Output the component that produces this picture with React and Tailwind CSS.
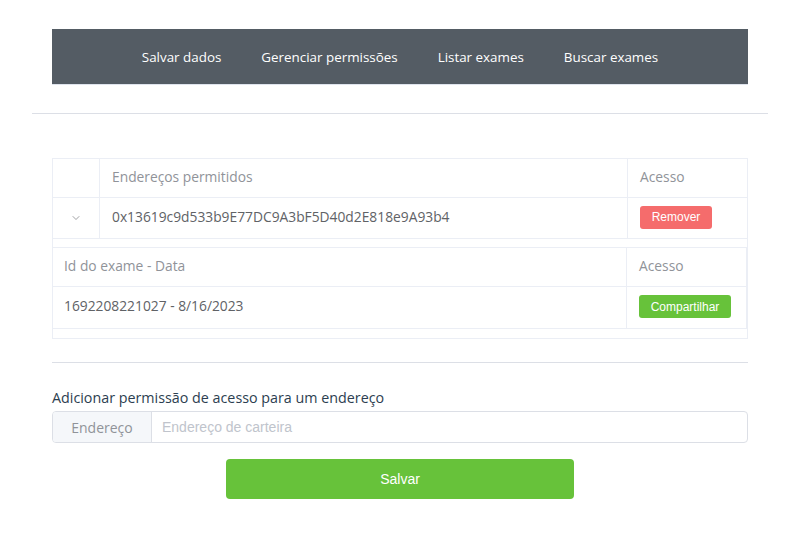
import { ChevronDown } from 'lucide-react';

const font = { fontFamily: '"Open Sans", "Noto Sans", sans-serif' };
const arial = { fontFamily: '"Liberation Sans", Arial, sans-serif' };

export default function App() {
  const navItems = ['Salvar dados', 'Gerenciar permissões', 'Listar exames', 'Buscar exames'];

  return (
    <div className="w-[800px] h-[551px] bg-white" style={font}>
      {/* Menu */}
      <div className="px-[52px] pt-[29px]">
        <div className="h-[56px] bg-[#545c64] border-b border-[#dfe4ed] flex justify-center items-stretch">
          {navItems.map((item) => (
            <div key={item} className="px-5 pt-[2px] flex items-center text-[13.4px] text-white">
              {item}
            </div>
          ))}
        </div>
      </div>

      <div className="mx-[32px] mt-[28px] h-px bg-[#dcdfe6]" />

      {/* Permissions table */}
      <div className="mx-[52px] mt-[44px] border border-[#ebeef5] text-[13.8px]">
        <div className="grid grid-cols-[47px_1fr_119px] h-[39px] border-b border-[#ebeef5] text-[#909399]">
          <div className="border-r border-[#ebeef5]" />
          <div className="border-r border-[#ebeef5] flex items-center px-3 pb-[2px]">Endereços permitidos</div>
          <div className="flex items-center px-3 pb-[2px]">Acesso</div>
        </div>
        <div className="grid grid-cols-[47px_1fr_119px] h-[41px] border-b border-[#ebeef5] text-[#606266]">
          <div className="border-r border-[#ebeef5] flex items-center justify-center">
            <ChevronDown size={12} strokeWidth={1.2} className="text-[#606266]" />
          </div>
          <div className="border-r border-[#ebeef5] flex items-center px-3 pb-[2px]">0x13619c9d533b9E77DC9A3bF5D40d2E818e9A93b4</div>
          <div className="flex items-center px-3 pb-[2px]">
            <button className="h-[23px] w-[72px] rounded-[3px] bg-[#f56c6c] text-white text-[12px]" style={arial}>
              Remover
            </button>
          </div>
        </div>

        {/* Expanded row */}
        <div className="pt-2 pb-[9px]">
          <div className="border border-l-0 border-[#ebeef5]">
            <div className="grid grid-cols-[1fr_119px] h-[39px] border-b border-[#ebeef5] text-[#909399]">
              <div className="border-r border-[#ebeef5] flex items-center px-[11px] pb-[1px]">Id do exame - Data</div>
              <div className="flex items-center px-3 pb-[1px]">Acesso</div>
            </div>
            <div className="grid grid-cols-[1fr_119px] h-[41px] text-[#606266]">
              <div className="border-r border-[#ebeef5] flex items-center px-[11px] pb-[2px]">1692208221027 - 8/16/2023</div>
              <div className="flex items-center px-3 pb-[2px]">
                <button className="h-[23px] w-[92px] rounded-[3px] bg-[#67c23a] text-white text-[12px]" style={arial}>
                  Compartilhar
                </button>
              </div>
            </div>
          </div>
        </div>
      </div>

      <div className="mx-[52px] mt-[23px] h-px bg-[#dcdfe6]" />

      {/* Add permission form */}
      <div className="mx-[52px] mt-[25px]">
        <div className="text-[14.3px] text-[#2c3e50] leading-[20px]">Adicionar permissão de acesso para um endereço</div>
        <div className="mt-[3px] flex h-[32px] border border-[#dcdfe6] rounded-[4px] overflow-hidden">
          <div className="w-[99px] bg-[#f5f7fa] border-r border-[#dcdfe6] flex items-center justify-center text-[14px] text-[#909399]">
            Endereço
          </div>
          <input
            placeholder="Endereço de carteira"
            className="flex-1 px-[10px] text-[14px] text-[#606266] outline-none placeholder:text-[#c0c4cc]"
            style={arial}
          />
        </div>
        <div className="mt-[16px] flex justify-center">
          <button className="w-[348px] h-[40px] rounded-[4px] bg-[#67c23a] text-white text-[14px]" style={arial}>
            Salvar
          </button>
        </div>
      </div>
    </div>
  );
}
